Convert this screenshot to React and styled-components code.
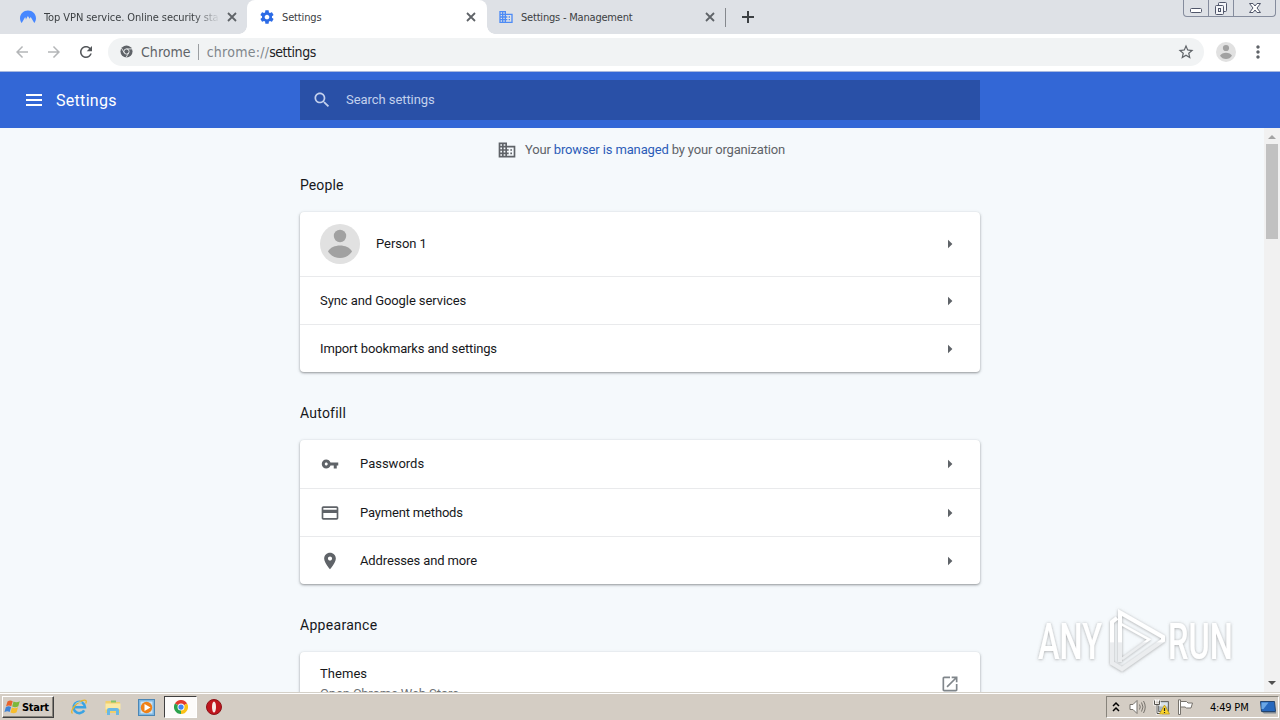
import React from "react";
import styled, { createGlobalStyle, css } from "styled-components";

const Global = createGlobalStyle`
  * { box-sizing: border-box; }
  body { margin: 0; overflow: hidden; }
  svg { display: block; flex: none; }
`;

const uiFont = '"DejaVu Sans Condensed", "DejaVu Sans", sans-serif';

const Screen = styled.div`
  position: relative;
  width: 1280px;
  height: 720px;
  display: flex;
  flex-direction: column;
  overflow: hidden;
  font-family: Roboto, sans-serif;
  font-size: 13px;
  color: #17181b;
  background: #f5f9fc;
`;

const Text = styled.span`
  white-space: pre;
  letter-spacing: ${(p) => p.$ls || 0}px;
`;

/* ---- tab strip ---- */
const TabStrip = styled.div`
  height: 34px;
  flex: none;
  display: flex;
  background: #dee1e6;
`;

const Tab = styled.div`
  position: relative;
  width: ${(p) => p.$width}px;
  height: 34px;
  flex: none;
  display: flex;
  align-items: center;
  padding: 0 ${(p) => p.$right || 9}px 0 ${(p) => p.$left}px;
  font-family: ${uiFont};
  font-size: 11px;
  color: #3c4043;
  ${(p) =>
    p.$active &&
    css`
      background: #fff;
      border-radius: 8px 8px 0 0;
      &::before,
      &::after {
        content: "";
        position: absolute;
        bottom: 0;
        width: 8px;
        height: 8px;
      }
      &::before {
        left: -8px;
        background: radial-gradient(circle at 0 0, transparent 7.5px, #fff 8px);
      }
      &::after {
        right: -8px;
        background: radial-gradient(circle at 100% 0, transparent 7.5px, #fff 8px);
      }
    `}
`;

const TabTitle = styled.div`
  flex: 1;
  overflow: hidden;
  margin: 1px 7px 0 ${(p) => p.$gap}px;
  white-space: nowrap;
  letter-spacing: ${(p) => p.$ls}px;
  ${(p) => p.$fade && css`mask-image: linear-gradient(to right, #000 150px, transparent 176px);`}
`;

const TabDivider = styled.div`
  width: 1px;
  height: 19px;
  margin: 8px 14px 0 0;
  background: #85888d;
`;

const WindowButtons = styled.div`
  display: flex;
  height: 17px;
  margin: 0 4px 0 auto;
  border: 1px solid #858c9d;
  border-top: 0;
  border-radius: 0 0 4px 4px;
`;

const WindowButton = styled.div`
  width: ${(p) => p.$width}px;
  display: flex;
  justify-content: center;
  & + & { border-left: 1px solid #858c9d; }
`;

/* ---- toolbar ---- */
const Toolbar = styled.div`
  height: 38px;
  flex: none;
  display: flex;
  align-items: center;
  padding: 0 12px 2px 13px;
  border-bottom: 1px solid #a9b9df;
  background: #fff;
`;

const NavIcons = styled.div`
  display: flex;
  gap: 14px;
`;

const Omnibox = styled.div`
  width: 1096px;
  height: 28px;
  flex: none;
  display: flex;
  align-items: center;
  margin-left: 13px;
  padding: 0 9px 0 12px;
  border-radius: 14px;
  background: #f1f3f4;
  font-family: ${uiFont};
  font-size: 14px;
  color: #5f6368;
`;

const OmniboxLabel = styled(Text)` margin-left: 8px; `;

const SchemeDivider = styled.div`
  width: 1px;
  height: 16px;
  margin: 0 8px 0 7px;
  background: #9b9ea1;
`;

const Dim = styled(Text)` color: #80868b; `;
const Strong = styled(Text)` color: #202124; `;
const Spacer = styled.div` flex: 1; `;

const ToolbarEnd = styled.div`
  display: flex;
  align-items: center;
  gap: 12px;
  margin-left: 12px;
`;

/* ---- page header ---- */
const Header = styled.header`
  height: 56px;
  flex: none;
  display: flex;
  align-items: center;
  background: #3367d6;
`;

const Brand = styled.div`
  width: 300px;
  display: flex;
  align-items: center;
  gap: 14px;
  padding-left: 26px;
  color: #fff;
  font-size: 16px;
`;

const BrandName = styled(Text)` padding-top: 1px; `;

const SearchField = styled.div`
  width: 680px;
  height: 40px;
  display: flex;
  align-items: center;
  gap: 14px;
  padding-left: 12px;
  background: #2950a7;
  color: #c3d0ed;
`;

const SearchLabel = styled(Text)` padding-bottom: 2px; `;

/* ---- settings page ---- */
const Page = styled.main`
  flex: 1;
  min-height: 0;
  display: flex;
`;

const Column = styled.div`
  width: 680px;
  height: 564px;
  margin-left: 300px;
`;

const Notice = styled.div`
  height: 30px;
  display: flex;
  align-items: center;
  gap: 8px;
  padding: 13px 0 0 197px;
  color: #5f6368;
`;

const Link = styled(Text)` color: #2c5cb8; `;

const Heading = styled.h2`
  height: ${(p) => p.$height}px;
  margin: 0;
  padding-top: ${(p) => p.$height - 36}px;
  font-size: 14px;
  line-height: 18px;
  font-weight: 400;
`;

const Card = styled.section`
  border-radius: 4px;
  background: #fff;
  box-shadow: 0 1px 2px rgba(60, 64, 67, 0.4), 0 1px 3px 1px rgba(60, 64, 67, 0.13);
`;

const RowLabel = styled(Text)``;

const Row = styled.div`
  height: ${(p) => p.$height || 48}px;
  display: flex;
  align-items: center;
  gap: ${(p) => p.$gap || 20}px;
  padding: 0 ${(p) => p.$right || 27}px 0 20px;
  & + & { border-top: 1px solid #e9eaec; }
  &:first-child > ${RowLabel} { padding-bottom: 2px; }
`;

const RowIcon = styled.div`
  width: 20px;
  display: flex;
  justify-content: center;
`;

const TwoLine = styled.div`
  display: flex;
  flex-direction: column;
  line-height: 20px;
`;

const Sub = styled(Text)` color: #6d7175; `;

const Scrollbar = styled.div`
  width: 16px;
  margin-left: auto;
  display: flex;
  flex-direction: column;
  align-items: center;
  justify-content: space-between;
  background: #f1f1f1;
`;

const ScrollTop = styled.div`
  display: flex;
  flex-direction: column;
  align-items: center;
`;

const Thumb = styled.div`
  width: 12px;
  height: 95px;
  background: #c1c1c1;
`;

/* ---- taskbar ---- */
const Taskbar = styled.div`
  height: 28px;
  flex: none;
  display: flex;
  align-items: center;
  padding: 1px 0 0 2px;
  border-top: 1px solid #d4d0c8;
  box-shadow: inset 0 1px 0 #fff;
  background: #d4cdc4;
  font-family: ${uiFont};
  font-size: 11px;
  color: #000;
`;

const StartButton = styled.div`
  width: 52px;
  height: 22px;
  display: flex;
  align-items: center;
  gap: 1px;
  padding-left: 1px;
  border: 1px solid;
  border-color: #fff #404040 #404040 #fff;
  box-shadow: inset -1px -1px 0 #87837b;
  font-weight: 700;
`;

const QuickLaunch = styled.div`
  display: flex;
  align-items: center;
  gap: 16px;
  margin-left: 16px;
`;

const RunningTask = styled.div`
  width: 33px;
  height: 22px;
  display: flex;
  align-items: center;
  justify-content: center;
  margin: 0 -7px;
  border: 1px solid;
  border-color: #404040 #fff #fff #404040;
  background: #fcfbfa;
`;

const Tray = styled.div`
  width: 173px;
  height: 22px;
  display: flex;
  align-items: center;
  margin: 0 1px 0 auto;
  padding: 0 2px 0 5px;
  border: 1px solid;
  border-color: #87837b #fff #fff #87837b;
`;

const TrayIcons = styled.div`
  display: flex;
  align-items: center;
  gap: 7px;
  margin-right: 16px;
`;

const Chevrons = styled.div` margin-right: 2px; `;

const Watermark = styled.div`
  position: absolute;
  left: 1030px;
  top: 602px;
`;

const Icon = ({ d, size = 20, color = "#5f6368" }) => (
  <svg width={size} height={size} viewBox="0 0 24 24" fill={color}>
    <path d={d} />
  </svg>
);

const P = {
  back: "M20 11H7.83l5.59-5.59L12 4l-8 8 8 8 1.41-1.41L7.83 13H20v-2z",
  forward: "M12 4l-1.41 1.41L16.17 11H4v2h12.17l-5.58 5.59L12 20l8-8z",
  reload:
    "M17.65 6.35C16.2 4.9 14.21 4 12 4c-4.42 0-7.99 3.58-7.99 8s3.57 8 7.99 8c3.73 0 6.84-2.55 7.73-6h-2.08c-.82 2.33-3.04 4-5.65 4-3.31 0-6-2.69-6-6s2.69-6 6-6c1.66 0 3.14.69 4.22 1.78L13 11h7V4l-2.35 2.35z",
  star: "M22 9.24l-7.19-.62L12 2 9.19 8.63 2 9.24l5.46 4.73L5.82 21 12 17.27 18.18 21l-1.63-7.03L22 9.24zM12 15.4l-3.76 2.27 1-4.28-3.32-2.88 4.38-.38L12 6.1l1.71 4.04 4.38.38-3.32 2.88 1 4.28L12 15.4z",
  more: "M12 8c1.1 0 2-.9 2-2s-.9-2-2-2-2 .9-2 2 .9 2 2 2zm0 2c-1.1 0-2 .9-2 2s.9 2 2 2 2-.9 2-2-.9-2-2-2zm0 6c-1.1 0-2 .9-2 2s.9 2 2 2 2-.9 2-2-.9-2-2-2z",
  search:
    "M15.5 14h-.79l-.28-.27C15.41 12.59 16 11.11 16 9.5 16 5.91 13.09 3 9.5 3S3 5.91 3 9.5 5.91 16 9.5 16c1.61 0 3.09-.59 4.23-1.57l.27.28v.79l5 4.99L20.49 19l-4.99-5zm-6 0C7.01 14 5 11.99 5 9.5S7.01 5 9.5 5 14 7.01 14 9.5 11.99 14 9.5 14z",
  gear: "M19.43 12.98c.04-.32.07-.64.07-.98s-.03-.66-.07-.98l2.11-1.65c.19-.15.24-.42.12-.64l-2-3.46c-.12-.22-.39-.3-.61-.22l-2.49 1c-.52-.4-1.08-.73-1.69-.98l-.38-2.65C14.46 2.18 14.25 2 14 2h-4c-.25 0-.46.18-.49.42l-.38 2.65c-.61.25-1.17.59-1.69.98l-2.49-1c-.23-.09-.49 0-.61.22l-2 3.46c-.13.22-.07.49.12.64l2.11 1.65c-.04.32-.07.65-.07.98s.03.66.07.98l-2.11 1.65c-.19.15-.24.42-.12.64l2 3.46c.12.22.39.3.61.22l2.49-1c.52.4 1.08.73 1.69.98l.38 2.65c.03.24.24.42.49.42h4c.25 0 .46-.18.49-.42l.38-2.65c.61-.25 1.17-.59 1.69-.98l2.49 1c.23.09.49 0 .61-.22l2-3.46c.12-.22.07-.49-.12-.64l-2.11-1.65zM12 15.5c-1.93 0-3.5-1.57-3.5-3.5s1.57-3.5 3.5-3.5 3.5 1.57 3.5 3.5-1.57 3.5-3.5 3.5z",
  business:
    "M12 7V3H2v18h20V7H12zM6 19H4v-2h2v2zm0-4H4v-2h2v2zm0-4H4V9h2v2zm0-4H4V5h2v2zm4 12H8v-2h2v2zm0-4H8v-2h2v2zm0-4H8V9h2v2zm0-4H8V5h2v2zm10 12h-8v-2h2v-2h-2v-2h2v-2h-2V9h8v10zm-2-8h-2v2h2v-2zm0 4h-2v2h2v-2z",
  key: "M12.65 10C11.83 7.67 9.61 6 7 6c-3.31 0-6 2.69-6 6s2.69 6 6 6c2.61 0 4.83-1.67 5.65-4H17v4h4v-4h2v-4H12.65zM7 14c-1.1 0-2-.9-2-2s.9-2 2-2 2 .9 2 2-.9 2-2 2z",
  card: "M20 4H4c-1.11 0-1.99.89-1.99 2L2 18c0 1.11.89 2 2 2h16c1.11 0 2-.89 2-2V6c0-1.11-.89-2-2-2zm0 14H4v-6h16v6zm0-10H4V6h16v2z",
  place:
    "M12 2C8.13 2 5 5.13 5 9c0 5.25 7 13 7 13s7-7.75 7-13c0-3.87-3.13-7-7-7zm0 9.5c-1.38 0-2.5-1.12-2.5-2.5s1.12-2.5 2.5-2.5 2.5 1.12 2.5 2.5-1.12 2.5-2.5 2.5z",
  open: "M19 19H5V5h7V3H5c-1.11 0-2 .9-2 2v14c0 1.1.89 2 2 2h14c1.1 0 2-.9 2-2v-7h-2v7zM14 3v2h3.59l-9.83 9.83 1.41 1.41L19 6.41V10h2V3h-7z",
};

const CloseX = () => (
  <svg width="12" height="12" viewBox="0 0 12 12" stroke="#5f6368" strokeWidth="1.8">
    <path d="M2 2l8 8M10 2l-8 8" />
  </svg>
);

const Arrow = () => (
  <svg width="6" height="10" viewBox="0 0 6 10" fill="#5f6368">
    <path d="M1 .7l4.400 4.300L1 9.300z" />
  </svg>
);

const Avatar = ({ size }) => (
  <svg width={size} height={size} viewBox="0 0 40 40">
    <circle cx="20" cy="20" r="20" fill="#e1e1e1" />
    <circle cx="20" cy="12" r="6.2" fill="#a1a1a1" />
    <path d="M8 27.5c2-4 7-6 12-6s10 2 12 6c-2.500 4-7 6.500-12 6.500s-9.500-2.500-12-6.500z" fill="#a1a1a1" />
  </svg>
);

const NordIcon = () => (
  <svg width="16" height="14" viewBox="0 0 16 14">
    <path
      d="M1.700 13C.6 11.600 0 10 0 8.200 0 3.800 3.600.5 8 .5s8 3.300 8 7.700c0 1.800-.6 3.400-1.700 4.800L10.700 7l-1 1.600.4 1L7.900 5.900 5.700 9.700l.5.300L5.200 7z"
      fill="#4687ff"
    />
  </svg>
);

const ChromeGray = () => (
  <svg width="13" height="13" viewBox="0 0 14 14">
    <circle cx="7" cy="7" r="6.500" fill="#5f6368" />
    <circle cx="7" cy="7" r="2.800" fill="none" stroke="#f1f3f4" strokeWidth="1" />
    <path d="M7 4.200h6M4.600 8.400l-3-5M9.400 8.400l-3 5.200" stroke="#f1f3f4" strokeWidth=".9" />
  </svg>
);

const ChromeColor = () => (
  <svg width="14" height="14" viewBox="0 0 16 16">
    <path d="M8 8L1.070 4A8 8 0 0 1 14.930 4z" fill="#e33b2e" />
    <path d="M8 8L14.930 4A8 8 0 0 1 8 16z" fill="#fbc116" />
    <path d="M8 8V16A8 8 0 0 1 1.070 4z" fill="#2ba24c" />
    <circle cx="8" cy="8" r="4" fill="#fff" />
    <circle cx="8" cy="8" r="3" fill="#4285f4" />
  </svg>
);

const WindowsFlag = () => (
  <svg width="17" height="16" viewBox="0 0 17 16">
    <path d="M3.500 2.500C5.500 1 7 1.200 8.700 2.200L7.300 7.300C5.500 6.300 4 6.300 2 7.500z" fill="#e8632b" />
    <path d="M9.500 2.600c2 1 4 1 6.300-.3l-1.500 5c-2 1.300-4 1.300-6.100.3z" fill="#7cb83a" />
    <path d="M1.800 8.300c2-1.200 3.500-1.200 5.300-.2l-1.400 5C4 12 2.300 12.200.4 13.300z" fill="#3f83d6" />
    <path d="M7.900 8.500c2.200 1 4 1 6.100-.2l-1.400 5c-2 1.300-4 1.200-6.100.2z" fill="#f7bd2c" />
  </svg>
);

const IeIcon = () => (
  <svg width="18" height="18" viewBox="0 0 18 18" fill="none">
    <path d="M14.200 12.400A5.700 5.700 0 1 1 15 9.300H5" stroke="#3aa3e3" strokeWidth="2.600" />
    <path d="M2.500 15.500C-.5 13 6 5 12 2.600c4-1.500 5 .2 3.700 3" stroke="#e8b52c" strokeWidth="1.300" />
    <path d="M5 6.500c1.500-2.500 5-3 7-1.300" stroke="#a6dcfa" strokeWidth=".9" />
  </svg>
);

const FolderIcon = () => (
  <svg width="18" height="18" viewBox="0 0 18 18">
    <path d="M1.500 3h5l1 1h8.500v11H1.500z" fill="#f1cf6b" />
    <path d="M7 2.500h5v2H7z" fill="#83c46c" />
    <path d="M1.500 5.500h15v6h-15z" fill="#fae9a4" />
    <path d="M3 17v-5q0-2 2-2h8q2 0 2 2v5h-3v-4H6v4z" fill="#69b8e4" />
  </svg>
);

const MediaIcon = () => (
  <svg width="17" height="17" viewBox="0 0 17 17">
    <rect x=".5" y=".5" width="16" height="16" fill="#7eb7e2" stroke="#4b86b5" />
    <rect x="2.500" y="2.500" width="12" height="12" fill="#cbe4f5" />
    <circle cx="8.500" cy="8.500" r="5.700" fill="#ef8118" />
    <path d="M6.500 5l6 3.500-6 3.500z" fill="#fff" />
  </svg>
);

const OperaIcon = () => (
  <svg width="16" height="16" viewBox="0 0 16 16">
    <circle cx="8" cy="8" r="7.500" fill="#c0161e" stroke="#8c1318" />
    <ellipse cx="8" cy="8" rx="2" ry="5.600" fill="#f7eae8" />
  </svg>
);

const SpeakerIcon = () => (
  <svg width="17" height="16" viewBox="0 0 17 16" fill="none" stroke="#77736d">
    <path d="M1 5.500h3L8 1.500v13l-4-4H1z" fill="#fff" />
    <path d="M10.500 5.500q1.500 2.500 0 5M12.500 3.500q3 4.500 0 9M14.500 2q3.500 6 0 12" />
  </svg>
);

const NetworkIcon = () => (
  <svg width="17" height="16" viewBox="0 0 17 16">
    <path d="M5.500 2.500h10v10h-10z" fill="#a9b5bf" stroke="#6a6a66" />
    <path d="M6.500 3.500h8v4h-8z" fill="#d9e2e8" />
    <path d="M1.500 1.500v4h5v-4M2.500.5v2M5.500.5v2M4 5.500v9h5" fill="none" stroke="#fff" strokeWidth="2.200" />
    <path d="M1.500 1.500v4h5v-4M4 5.500v9h3" fill="none" stroke="#55534e" />
    <path d="M11.500 6l5 9h-10z" fill="#fbd42b" stroke="#b99412" strokeWidth=".7" />
    <path d="M11.500 9v3M11.500 13v1" stroke="#222" strokeWidth="1.200" />
  </svg>
);

const FlagIcon = () => (
  <svg width="17" height="16" viewBox="0 0 17 16" fill="#fff" stroke="#77736d">
    <path d="M1.500.8h2v14.700h-2z" />
    <path d="M3.500 2.500h6l1.500 1.500h4.500l-1.500 5H9.500L8 8H3.500z" />
  </svg>
);

const DesktopIcon = () => (
  <svg width="16" height="14" viewBox="0 0 16 14">
    <path d="M.5 1.500h14l1 10h-14z" fill="#2768bd" stroke="#24446d" />
    <path d="M1.500 2.500h7l-5 6.500h-2z" fill="#6aa7e6" />
    <path d="M2 12h14v1.500H4z" fill="#7d8791" />
  </svg>
);

const AnyRun = () => (
  <svg width="236" height="80" viewBox="0 0 236 80">
    <defs>
      <linearGradient id="wm" gradientUnits="userSpaceOnUse" x1="0" y1="0" x2="0" y2="76">
        <stop offset="0.520" stopColor="#fff" />
        <stop offset="0.540" stopColor="#ebedef" />
      </linearGradient>
      <filter id="wmShadow" x="-10%" y="-20%" width="120%" height="140%">
        <feDropShadow dx="0" dy="0.500" stdDeviation="1.800" floodColor="#777" floodOpacity="0.650" />
      </filter>
    </defs>
    <g filter="url(#wmShadow)" fill="url(#wm)" fontFamily="Roboto, sans-serif" fontSize="50" fontWeight="500">
      <text transform="translate(8 56.500) scale(.65 1)">ANY</text>
      <text transform="translate(138 56.500) scale(.65 1)">RUN</text>
      <g fill="none" stroke="url(#wm)" strokeWidth="4">
        <path d="M90 60V10.500l43 24.500v3.500L92 67l-10-6V20l5-4" />
        <path d="M91 22l28 15.500L92 57" strokeWidth="2.500" />
      </g>
    </g>
  </svg>
);

const NavRow = ({ icon, iconSize, label, ls }) => (
  <Row>
    {icon && (
      <RowIcon>
        <Icon d={icon} size={iconSize} />
      </RowIcon>
    )}
    <RowLabel $ls={ls}>{label}</RowLabel>
    <Spacer />
    <Arrow />
  </Row>
);

export default function App() {
  return (
    <Screen>
      <Global />
      <TabStrip>
        <Tab $width={247} $left={20}>
          <NordIcon />
          <TabTitle $gap={8} $ls={-0.08} $fade>Top VPN service. Online security sta</TabTitle>
          <CloseX />
        </Tab>
        <Tab $width={240} $left={12} $right={10} $active>
          <Icon d={P.gear} size={16} color="#2c6be6" />
          <TabTitle $gap={7} $ls={-0.15}>Settings</TabTitle>
          <CloseX />
        </Tab>
        <Tab $width={238} $left={11}>
          <Icon d={P.business} size={16} color="#4d8bf5" />
          <TabTitle $gap={7} $ls={-0.2}>Settings - Management</TabTitle>
          <CloseX />
        </Tab>
        <TabDivider />
        <svg width="16" height="34" viewBox="0 0 16 34" stroke="#3c4043" strokeWidth="2">
          <path d="M2 17h12M8 11v12" />
        </svg>
        <WindowButtons>
          <WindowButton $width={24}>
            <svg width="14" height="16" viewBox="0 0 14 16" fill="#fff" stroke="#50566a">
              <rect x="1.500" y="8.500" width="11" height="4" rx="1" />
            </svg>
          </WindowButton>
          <WindowButton $width={25}>
            <svg width="14" height="16" viewBox="0 0 14 16" fill="#f4f5f8" stroke="#50566a">
              <rect x="4.500" y="2.500" width="8" height="9" rx="1" />
              <rect x="1.500" y="5.500" width="8" height="9" rx="1" />
              <rect x="4.500" y="8.500" width="2" height="3" />
            </svg>
          </WindowButton>
          <WindowButton $width={42}>
            <svg width="14" height="16" viewBox="0 0 14 16" fill="#fff" stroke="#50566a">
              <path d="M1.500 3.500h3.500l2 2.500 2-2.500h3.500L9 8l3.500 4.500H9l-2-2.500-2 2.500H1.500L5 8z" />
            </svg>
          </WindowButton>
        </WindowButtons>
      </TabStrip>

      <Toolbar>
        <NavIcons>
          <Icon d={P.back} size={18} color="#b4b6b8" />
          <Icon d={P.forward} size={18} color="#b4b6b8" />
          <Icon d={P.reload} size={18} color="#54575b" />
        </NavIcons>
        <Omnibox>
          <ChromeGray />
          <OmniboxLabel $ls={0.05}>Chrome</OmniboxLabel>
          <SchemeDivider />
          <Dim $ls={0.25}>chrome://</Dim>
          <Strong $ls={-0.45}>settings</Strong>
          <Spacer />
          <Icon d={P.star} size={18} />
        </Omnibox>
        <ToolbarEnd>
          <Avatar size={20} />
          <Icon d={P.more} size={20} />
        </ToolbarEnd>
      </Toolbar>

      <Header>
        <Brand>
          <svg width="16" height="12" viewBox="0 0 16 12" fill="#fff">
            <path d="M0 0h16v2H0zM0 5h16v2H0zM0 10h16v2H0z" />
          </svg>
          <BrandName $ls={0.3}>Settings</BrandName>
        </Brand>
        <SearchField>
          <Icon d={P.search} size={20} color="#c3d0ed" />
          <SearchLabel $ls={-0.06}>Search settings</SearchLabel>
        </SearchField>
      </Header>

      <Page>
        <Column>
          <Notice>
            <Icon d={P.business} />
            <Text $ls={-0.18}>
              Your <Link $ls={-0.13}>browser is managed</Link> by your organization
            </Text>
          </Notice>
          <Heading $height={54}><Text $ls={0.1}>People</Text></Heading>
          <Card>
            <Row $height={64} $gap={16}>
              <Avatar size={40} />
              <RowLabel $ls={-0.05}>Person 1</RowLabel>
              <Spacer />
              <Arrow />
            </Row>
            <NavRow label="Sync and Google services" ls={-0.08} />
            <NavRow label="Import bookmarks and settings" ls={-0.15} />
          </Card>
          <Heading $height={68}><Text $ls={0.22}>Autofill</Text></Heading>
          <Card>
            <NavRow icon={P.key} iconSize={18} label="Passwords" ls={0} />
            <NavRow icon={P.card} label="Payment methods" ls={-0.17} />
            <NavRow icon={P.place} label="Addresses and more" ls={-0.13} />
          </Card>
          <Heading $height={68}><Text $ls={0.3}>Appearance</Text></Heading>
          <Card>
            <Row $height={64} $right={20}>
              <TwoLine>
                <Text $ls={0.05}>Themes</Text>
                <Sub $ls={-0.13}>Open Chrome Web Store</Sub>
              </TwoLine>
              <Spacer />
              <Icon d={P.open} color="#80868b" />
            </Row>
          </Card>
        </Column>
        <Scrollbar>
          <ScrollTop>
            <svg width="16" height="16" viewBox="0 0 16 16" fill="#a3a3a3">
              <path d="M4 11l4-4 4 4z" />
            </svg>
            <Thumb />
          </ScrollTop>
          <svg width="16" height="16" viewBox="0 0 16 16" fill="#505050">
            <path d="M4 5l4 4 4-4z" />
          </svg>
        </Scrollbar>
      </Page>

      <Taskbar>
        <StartButton>
          <WindowsFlag />
          <Text $ls={-0.3}>Start</Text>
        </StartButton>
        <QuickLaunch>
          <IeIcon />
          <FolderIcon />
          <MediaIcon />
          <RunningTask><ChromeColor /></RunningTask>
          <OperaIcon />
        </QuickLaunch>
        <Tray>
          <TrayIcons>
            <Chevrons>
              <svg width="8" height="12" viewBox="0 0 8 12" fill="none" stroke="#000" strokeWidth="1.500">
                <path d="M1 5l3-3 3 3M1 10l3-3 3 3" />
              </svg>
            </Chevrons>
            <SpeakerIcon />
            <NetworkIcon />
            <FlagIcon />
          </TrayIcons>
          <Text $ls={-0.2}>4:49 PM</Text>
          <Spacer />
          <DesktopIcon />
        </Tray>
      </Taskbar>
      <Watermark><AnyRun /></Watermark>
    </Screen>
  );
}
